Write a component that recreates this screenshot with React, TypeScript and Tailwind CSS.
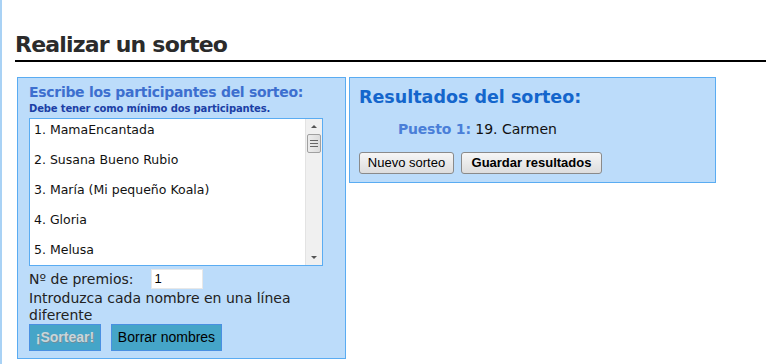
const participants = [
  '1. MamaEncantada',
  '2. Susana Bueno Rubio',
  '3. María (Mi pequeño Koala)',
  '4. Gloria',
  '5. Melusa',
  '6. Patricia',
];

const App = () => {
  return (
    <div className="min-h-[364px] bg-white border-l-2 border-[#a9d2f5] font-['DejaVu_Sans',sans-serif] text-[#222]">
      <div className="pl-[13px] pt-[32px]">
        <h1 className="text-[22px] font-bold leading-[26px] text-[#2b2b2b] tracking-[-0.8px]">Realizar un sorteo</h1>
        <div className="mt-[2px] h-[2px] bg-black" />
      </div>

      <div className="flex items-start gap-[3px] pl-[15px] pt-[15px]">
        {/* participantes */}
        <div className="w-[329px] border border-[#5aacf2] bg-[#bcdcfa] pl-[11px] pt-[5px] pb-[7px]">
          <h2 className="text-[14px] font-bold leading-[19px] tracking-[-0.3px] text-[#3d6fcf]">Escribe los participantes del sorteo:</h2>
          <p className="text-[10px] font-bold leading-[14px] tracking-[-0.15px] text-[#1b3fa6]">Debe tener como mínimo dos participantes.</p>
          <div className="mt-[2px] flex h-[148px] w-[294px] border border-[#5aacf2] bg-white">
            <div className="flex-1 overflow-hidden pl-[4px] pt-[3px] text-[12.5px] leading-[15px] text-[#111]">
              {participants.map(p => (
                <div key={p} className="h-[30px]">{p}</div>
              ))}
            </div>
            <div className="flex w-[17px] flex-col items-center bg-[#f0f0f0] border-l border-[#e3e3e3]">
              <div className="mt-[6px] h-0 w-0 border-x-[3px] border-b-[3px] border-x-transparent border-b-[#555]" />
              <div className="mt-[6px] flex h-[19px] w-[14px] flex-col items-center justify-center gap-[2px] rounded-[2px] border border-[#a0a0a0] bg-gradient-to-r from-[#ececec] to-[#dcdcdc]">
                <div className="h-px w-[8px] bg-[#666]" />
                <div className="h-px w-[8px] bg-[#666]" />
                <div className="h-px w-[8px] bg-[#666]" />
              </div>
              <div className="flex-1" />
              <div className="mb-[6px] h-0 w-0 border-x-[3px] border-t-[3px] border-x-transparent border-t-[#555]" />
            </div>
          </div>
          <div className="mt-[3px] flex items-center text-[14px] leading-[20px] text-[#222]">
            <span className="shrink-0 whitespace-nowrap">Nº de premios:</span>
            <div className="ml-[17px] flex h-[20px] w-[52px] shrink-0 items-center border border-[#e8e8e8] bg-white px-[3px] font-['Liberation_Sans',sans-serif] text-[13px] text-black">
              1
            </div>
          </div>
          <p className="mt-[1px] w-[290px] text-[14px] leading-[17px] text-[#222]">Introduzca cada nombre en una línea diferente</p>
          <div className="flex gap-[10px] font-['Liberation_Sans',sans-serif]">
            <button className="h-[27px] w-[72px] border border-[#4a90e2] bg-[#45a5c8] text-[14px] font-bold text-[#c9d5da] [text-shadow:1px_1px_0_#6f8f9c]">¡Sortear!</button>
            <button className="h-[27px] w-[111px] border border-[#4a90e2] bg-[#45a5c8] text-[14px] text-black">Borrar nombres</button>
          </div>
        </div>

        {/* resultados */}
        <div className="w-[367px] border border-[#5aacf2] bg-[#bcdcfa] pl-[9px] pt-[8px] pb-[8px]">
          <h2 className="text-[17.5px] font-bold leading-[22px] text-[#1466cc]">Resultados del sorteo:</h2>
          <p className="mt-[12px] pl-[39px] text-[14px] leading-[18px]">
            <span className="font-bold text-[#4a7fd8] tracking-[-0.2px]">Puesto 1:</span> <span className="text-[#111]">19. Carmen</span>
          </p>
          <div className="mt-[14px] flex gap-[7px] font-['Liberation_Sans',sans-serif] text-[13px] text-black">
            <button className="h-[22px] w-[95px] rounded-[3px] border border-[#8a8a8a] bg-gradient-to-b from-[#f6f6f6] to-[#dddddd]">Nuevo sorteo</button>
            <button className="h-[22px] w-[141px] rounded-[3px] border border-[#8a8a8a] bg-gradient-to-b from-[#f6f6f6] to-[#dddddd] font-bold">Guardar resultados</button>
          </div>
        </div>
      </div>
    </div>
  );
};

export default App;
